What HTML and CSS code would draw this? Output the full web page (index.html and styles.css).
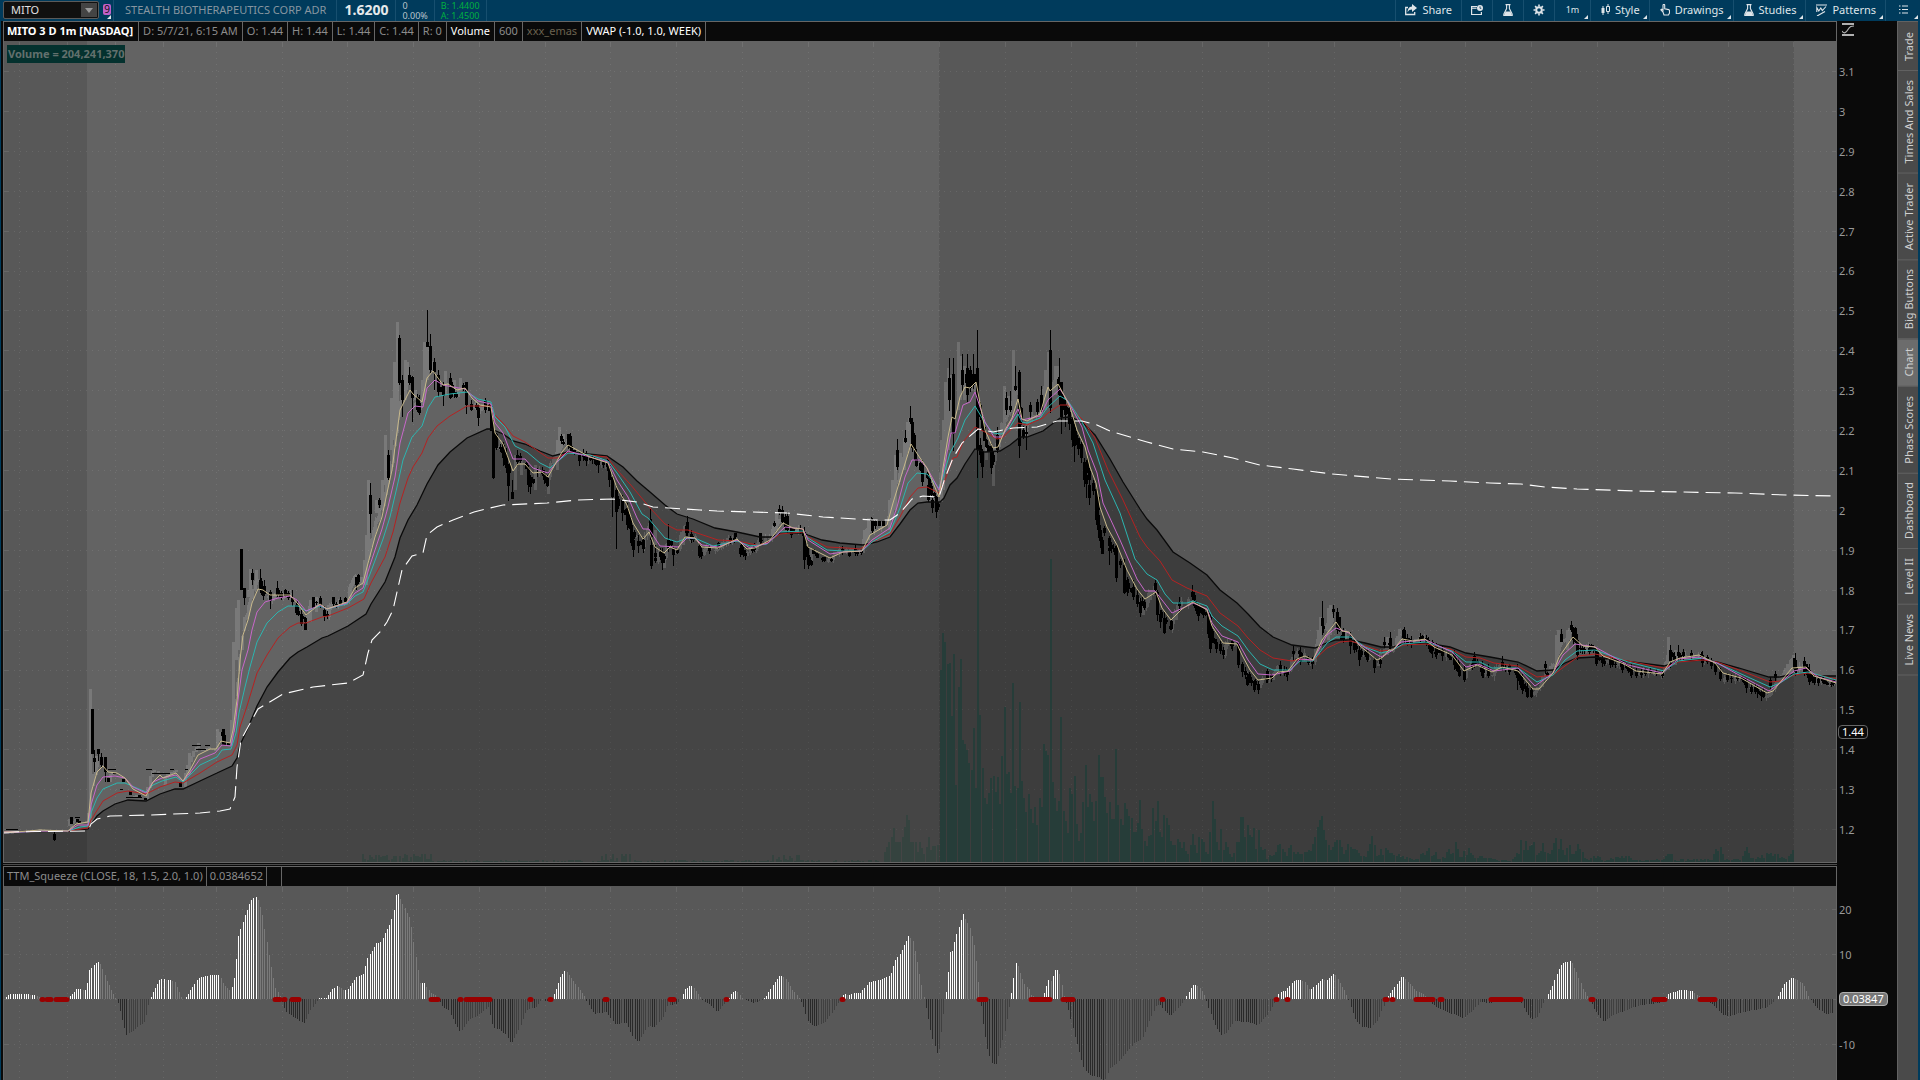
FILE: index.html
```html
<!DOCTYPE html>
<html lang="en">
  <head>
    <meta charset="UTF-8" />
    <meta name="viewport" content="width=device-width, initial-scale=1.0" />
    <title>MITO - Chart</title>
    <link rel="stylesheet" href="styles.css">
  </head>
  <body>
    <header class="topbar">
      <div class="symbol">
        <input class="symbol-input" type="text" value="MITO" aria-label="Symbol" />
        <button class="symbol-drop" aria-label="Symbol list">
          <svg width="8" height="5" viewBox="0 0 8 5"><path d="M0 0h8L4 5z" fill="#9a9a9a" /></svg>
        </button>
      </div>
      <button class="link-badge" aria-label="Link group 9"><span>9</span></button>
      <div class="company">STEALTH BIOTHERAPEUTICS CORP ADR</div>
      <div class="last">1.6200</div>
      <div class="pair"><span>0</span><span>0.00%</span></div>
      <div class="pair quote"><span>B: 1.4400</span><span>A: 1.4500</span></div>
      <nav class="tools">
        <button class="tool">
          <svg width="12" height="12" viewBox="0 0 12 12"><path d="M3 3.500H.7v7h9V8" fill="none" stroke="#dfe5e9" stroke-width="1.300" /><path d="M7 0l5 4-5 4V5.600C5 5.600 3.600 6.300 2.600 8.300 2.600 5 4 2.600 7 2.400z" fill="#dfe5e9" /></svg>
          Share
        </button>
        <button class="tool icon" aria-label="Detach">
          <svg width="12" height="12" viewBox="0 0 12 12"><path d="M6 2.500H.6v8h9.800V8" fill="none" stroke="#dfe5e9" stroke-width="1.200" /><path d="M.6 4.200h5" stroke="#dfe5e9" stroke-width="1.200" /><circle cx="9" cy="4" r="3" fill="#dfe5e9" /><path d="M9 2.300v2h1.300" fill="none" stroke="#003b5c" stroke-width=".8" /></svg>
        </button>
        <button class="tool icon" aria-label="Add study">
          <svg width="10" height="12" viewBox="0 0 10 12"><path d="M2.500.6h5M3.600.6v4L.8 10.200v1.200h8.400v-1.200L6.400 4.600v-4" fill="none" stroke="#dfe5e9" stroke-width="1.100" /><path d="M2.600 7.500h4.800l1.600 4H1z" fill="#dfe5e9" /></svg>
        </button>
        <button class="tool icon" aria-label="Settings">
          <svg width="12" height="12" viewBox="0 0 12 12"><circle cx="6" cy="6" r="2.800" fill="none" stroke="#dfe5e9" stroke-width="2" /><path d="M6 .5v2M6 9.500v2M.5 6h2M9.500 6h2M2.100 2.100l1.500 1.500M8.400 8.400l1.500 1.500M2.100 9.900l1.500-1.500M8.400 3.600l1.500-1.500" stroke="#dfe5e9" stroke-width="1.600" /></svg>
        </button>
        <button class="tool timeframe menu">1m</button>
        <button class="tool menu">
          <svg width="9" height="12" viewBox="0 0 9 12"><path d="M2 2v9M7 0v10" stroke="#dfe5e9" /><path d="M.5 4h3v5h-3z" fill="#dfe5e9" /><path d="M5.500 2.500h3v5h-3z" fill="#003b5c" stroke="#dfe5e9" /></svg>
          Style
        </button>
        <button class="tool menu">
          <svg width="10" height="12" viewBox="0 0 10 12"><path d="M3 8L.8 5.800l1-.6L3 6.300V1.200a.8.800 0 0 1 1.700 0v3.600l4 .8c.6.200.8.500.8 1.100v2.200L8.400 11H4z" fill="none" stroke="#dfe5e9" stroke-width="1.100" /></svg>
          Drawings
        </button>
        <button class="tool menu">
          <svg width="10" height="12" viewBox="0 0 10 12"><path d="M2.500.6h5M3.600.6v4L.8 10.200v1.200h8.400v-1.200L6.400 4.600v-4" fill="none" stroke="#dfe5e9" stroke-width="1.100" /><path d="M2.600 7.500h4.800l1.600 4H1z" fill="#dfe5e9" /></svg>
          Studies
        </button>
        <button class="tool menu">
          <svg width="11" height="12" viewBox="0 0 11 12"><path d="M0 1h11M1 12L9 7.500" stroke="#dfe5e9" stroke-width="1.200" /><path d="M.8 8V3.500L2.800 7l2-3 1.500 2.500L10 2.500" fill="none" stroke="#dfe5e9" stroke-width="1.100" /></svg>
          Patterns
        </button>
        <button class="tool icon list menu" aria-label="More">
          <svg width="9" height="9" viewBox="0 0 9 9"><path d="M0 1h1.500M0 4.500h1.500M0 8h1.500M3 1h6M3 4.500h6M3 8h6" stroke="#dfe5e9" stroke-width="1.200" /></svg>
        </button>
      </nav>
    </header>

    <main class="workspace">
      <div class="charts">
        <section class="panel price-panel">
          <div class="plot">
            <div class="legend">
              <span class="cell title">MITO 3 D 1m [NASDAQ]</span>
              <span class="cell">D: 5/7/21, 6:15 AM</span>
              <span class="cell">O: 1.44</span>
              <span class="cell">H: 1.44</span>
              <span class="cell">L: 1.44</span>
              <span class="cell">C: 1.44</span>
              <span class="cell">R: 0</span>
              <span class="cell on">Volume</span>
              <span class="cell">600</span>
              <span class="cell emas">xxx_emas</span>
              <span class="cell on">VWAP (-1.0, 1.0, WEEK)</span>
            </div>
            <div class="canvas">
              <svg id="price" viewBox="4 41 1832 821" preserveAspectRatio="none"></svg>
              <span class="volume-label">Volume = 204,241,370</span>
            </div>
          </div>
          <div class="axis">
            <svg class="fit" width="12" height="13" viewBox="0 0 12 13"><path d="M0 1h12M0 12h12" stroke="#b0b0b0" stroke-width="2" /><path d="M0 8c2 3 4 2 6-1.500S9.500 3 12 3" fill="none" stroke="#b0b0b0" stroke-width="1.200" /></svg>
            <ul class="scale">
              <li>3.1</li><li>3</li><li>2.9</li><li>2.8</li><li>2.7</li>
              <li>2.6</li><li>2.5</li><li>2.4</li><li>2.3</li><li>2.2</li>
              <li>2.1</li><li>2</li><li>1.9</li><li>1.8</li><li>1.7</li>
              <li>1.6</li><li>1.5</li><li>1.4</li><li>1.3</li><li>1.2</li>
            </ul>
            <span class="tag price-tag">1.44</span>
          </div>
        </section>

        <div class="splitter"></div>

        <section class="panel squeeze-panel">
          <div class="plot">
            <div class="legend">
              <span class="cell">TTM_Squeeze (CLOSE, 18, 1.5, 2.0, 1.0)</span>
              <span class="cell">0.0384652</span>
              <span class="cell empty"></span>
            </div>
            <div class="canvas">
              <svg id="squeeze" viewBox="4 886 1832 194" preserveAspectRatio="none"></svg>
            </div>
          </div>
          <div class="axis">
            <ul class="scale squeeze-scale">
              <li>20</li>
              <li>10</li>
              <li><span class="tag squeeze-tag">0.03847</span></li>
              <li>-10</li>
            </ul>
          </div>
        </section>
      </div>

      <nav class="tabs">
        <button class="tab">Trade</button>
        <button class="tab">Times And Sales</button>
        <button class="tab">Active Trader</button>
        <button class="tab">Big Buttons</button>
        <button class="tab active">Chart</button>
        <button class="tab">Phase Scores</button>
        <button class="tab">Dashboard</button>
        <button class="tab">Level II</button>
        <button class="tab">Live News</button>
      </nav>
    </main>

    <script src="chart.js"></script>
  </body>
</html>
```

FILE: styles.css
```css
* {
  box-sizing: border-box;
}
body {
  margin: 0;
  height: 100vh;
  display: flex;
  flex-direction: column;
  background: #0a0a0a;
  color: #8c8c8c;
  font-family: "Noto Sans", "Open Sans", sans-serif;
  font-size: 11px;
  line-height: 16px;
  overflow: hidden;
}
button,
input {
  font: inherit;
  border: none;
  padding: 0;
  margin: 0;
}

/* top bar */
.topbar {
  display: flex;
  flex: none;
  height: 21px;
  background: #003b5c;
}
.symbol {
  display: flex;
  width: 96px;
  height: 18px;
  margin: 1px 4px 0 3px;
  background: #101010;
  border: 1px solid #5a5a5a;
  border-radius: 2px;
}
.symbol-input {
  flex: 1;
  min-width: 0;
  padding-left: 7px;
  background: transparent;
  color: #e0e0e0;
}
.symbol-drop {
  display: flex;
  align-items: center;
  justify-content: center;
  width: 16px;
  margin: 1px;
  background: #444;
}
.link-badge {
  position: relative;
  width: 10px;
  background: transparent;
  color: #111;
}
.link-badge span {
  display: block;
  width: 8px;
  height: 11px;
  margin-top: -2px;
  border-radius: 2px;
  background: #c060c8;
  font-size: 10px;
  line-height: 11px;
}
.link-badge::after,
.menu::after {
  content: "";
  position: absolute;
  right: 2px;
  bottom: 2px;
  border: 2px solid transparent;
  border-right-color: #dfe5e9;
  border-bottom-color: #dfe5e9;
}
.company,
.last,
.pair {
  display: flex;
  align-items: center;
  padding-bottom: 2px;
  border-right: 1px solid #174f6f;
}
.company {
  padding-left: 11px;
  padding-right: 10px;
  border-left: 1px solid #174f6f;
  color: #8796a0;
}
.last {
  padding-left: 7px;
  padding-right: 7px;
  color: #e6e9eb;
  font-size: 14px;
  font-weight: bold;
}
.pair {
  flex-direction: column;
  align-items: flex-start;
  justify-content: center;
  padding: 0 6px;
  color: #b9c4cb;
  font-size: 9px;
  line-height: 10px;
}
.quote {
  color: #00b140;
}
.tools {
  display: flex;
  margin-left: auto;
}
.tool {
  position: relative;
  display: flex;
  align-items: center;
  gap: 5px;
  padding: 0 9px 2px;
  border-left: 1px solid #174f6f;
  background: transparent;
  color: #dfe5e9;
}
.tool.menu {
  padding-left: 10px;
}
.tool.icon {
  justify-content: center;
  width: 31px;
  padding: 0 0 2px;
}
.tool.list {
  width: 35px;
}
.tool.timeframe {
  justify-content: center;
  width: 36px;
  padding: 0 0 2px;
  font-size: 9px;
}

/* layout under the bar */
.workspace {
  display: flex;
  flex: 1;
  min-height: 0;
  border-left: 1px solid #003b5c;
  border-right: 2px solid #003b5c;
}
.charts {
  display: flex;
  flex: 1;
  flex-direction: column;
  min-width: 0;
  padding-left: 2px;
}
.panel {
  display: flex;
  min-height: 0;
}
.price-panel {
  flex: 842 1 0;
}
.squeeze-panel {
  flex: 214 1 0;
}
.plot {
  display: flex;
  flex: 1;
  flex-direction: column;
  min-width: 0;
  border: 1px solid #666;
}
.squeeze-panel .plot {
  border-bottom: none;
}
.splitter {
  height: 3px;
  margin-right: 60px;
  border-top: 1px solid #0a0a0a;
  border-bottom: 1px solid #0a0a0a;
  background: #4c4c4c;
}
.legend {
  display: flex;
  flex: none;
  height: 19px;
  line-height: 18px;
}
.cell {
  padding: 0 4px;
  border-right: 1px solid #666;
  white-space: nowrap;
}
.cell.title {
  padding-left: 3px;
  padding-right: 5px;
  color: #fff;
  font-weight: bold;
}
.cell.on {
  color: #fff;
}
.cell.emas {
  color: #6b6350;
}
.squeeze-panel .cell {
  padding: 0 3px;
}
.squeeze-panel .cell.empty {
  width: 15px;
}
.canvas {
  position: relative;
  flex: 1;
  min-height: 0;
}
.canvas svg {
  display: block;
  width: 100%;
  height: 100%;
}
.volume-label {
  position: absolute;
  left: 3px;
  top: 4px;
  padding: 0 1px;
  background: #04312e;
  color: #62706d;
  font-weight: bold;
  line-height: 18px;
}

/* value axis */
.axis {
  position: relative;
  display: flex;
  flex: none;
  flex-direction: column;
  width: 60px;
  padding: 2px 0 25px 2px;
}
.fit {
  flex: none;
  margin: 0 0 28px 3px;
}
.scale {
  display: flex;
  flex: 1;
  flex-direction: column;
  justify-content: space-between;
  margin: 0;
  padding: 0;
  list-style: none;
  color: #999;
}
.squeeze-scale {
  justify-content: flex-start;
  gap: 29px;
  padding-top: 34px;
}
.scale li {
  height: 16px;
}
.tag {
  padding: 0 3px;
  border: 1px solid #666;
  border-radius: 4px;
  line-height: 12px;
  color: #fff;
}
.price-tag {
  position: absolute;
  left: 1px;
  top: 83.6%;
  background: #0a0a0a;
}
.squeeze-tag {
  display: block;
  width: max-content;
  background: #777;
  border-color: #b0b0b0;
}

/* right hand tabs */
.tabs {
  display: flex;
  flex-direction: column;
  width: 21px;
  padding-top: 1px;
  background: #4a4a4a;
  border-left: 1px solid #626262;
  border-top: 1px solid #626262;
}
.tab {
  padding: 9px 0;
  border-top: 1px solid #626262;
  background: transparent;
  color: #d0d0d0;
  line-height: 19px;
  writing-mode: vertical-rl;
  transform: rotate(180deg);
}
.tab.active {
  background: #6c6c6c;
}
```

FILE: chart.js
```js
const NS = "http://www.w3.org/2000/svg";
const price = document.getElementById("price");
const squeeze = document.getElementById("squeeze");
const STEP = 2.19; // one minute bar

function add(parent, name, attrs) {
  const el = document.createElementNS(NS, name);
  for (const key in attrs) el.setAttribute(key, attrs[key]);
  parent.appendChild(el);
  return el;
}

function pairs(text) {
  return text.trim().split(/\s+/).map((p) => p.split(",").map(Number));
}

function rect(x, y, w, h) {
  return `M${Math.round(x)} ${Math.round(y)}h${w}v${Math.round(h)}h${-w}z`;
}

// linear interpolation over sorted [x, value] points
function valueAt(points, x) {
  for (let i = 1; i < points.length; i++) {
    if (x <= points[i][0]) {
      const [x0, y0] = points[i - 1];
      const [x1, y1] = points[i];
      return x1 === x0 ? y1 : y0 + ((y1 - y0) * (x - x0)) / (x1 - x0);
    }
  }
  return points[points.length - 1][1];
}

let seed = 7;
function random() {
  seed = (seed * 16807) % 2147483647;
  return seed / 2147483647;
}

const columns = [
  19, 67, 115, 163, 216, 282, 347, 413, 479, 545, 610, 676, 742, 808, 873,
  939, 1005, 1071, 1136, 1202, 1268, 1334, 1400, 1465, 1531, 1597, 1663, 1728,
  1793,
];

function grid(svg, top, bottom, rows) {
  const g = add(svg, "g", { stroke: "#fff", "stroke-opacity": 0.09 });
  for (const x of columns) {
    add(g, "path", { d: `M${x + 0.5} ${top + 11}V${bottom}`, "stroke-dasharray": "1 5" });
    add(g, "path", { d: `M${x + 0.5} ${top + 1}v5` });
  }
  for (const y of rows) {
    add(g, "path", { d: `M8 ${y + 0.5}H1832`, "stroke-dasharray": "1 5" });
    add(g, "path", { d: `M4 ${y + 0.5}h4M1832 ${y + 0.5}h4` });
  }
}

/* moving averages */
const tan = pairs(`4,833 40,830 68,831 76,824 88,822 91,793 97,772 103,766 108,772 117,773 125,778
133,789 146,796 153,782 160,775 163,778 176,773 183,781 190,770 198,755 210,749 216,749 221,741 230,743
233,730 237,700 240,660 243,635 248,620 252,603 258,589 263,590 270,595 278,595 290,595 298,604 306,615
320,604 327,609 347,602 355,588 363,583 367,567 375,537 382,517 387,493 392,470 395,447 400,410 410,390
413,394 422,402 427,378 433,371 443,385 448,384 457,390 465,388 472,398 480,405 491,407 495,433 503,444
513,471 518,464 525,464 533,473 542,472 548,477 562,452 568,445 590,457 608,463 617,488 627,505 633,523
643,539 649,532 655,547 664,553 670,547 677,550 685,537 695,538 702,547 718,548 737,539 747,549 755,548
770,540 783,523 793,528 803,529 808,547 830,558 843,552 862,551 870,535 887,525 893,503 900,480 911,444
918,455 927,468 939,497 943,468 948,437 952,417 955,419 960,397 965,387 970,388 976,382 980,403 985,430
993,448 998,447 1005,430 1012,418 1018,399 1022,419 1027,421 1040,414 1048,387 1050,391 1058,384
1065,397 1070,407 1077,430 1085,447 1090,467 1096,483 1100,507 1107,527 1117,545 1127,570 1137,589
1145,599 1156,592 1162,608 1171,620 1182,609 1193,602 1207,610 1212,626 1223,643 1237,644 1242,655
1250,670 1258,680 1272,678 1278,672 1288,671 1297,659 1305,656 1313,660 1322,640 1336,622 1342,631
1349,632 1359,645 1377,660 1383,657 1389,650 1393,650 1402,639 1413,641 1425,639 1434,647 1452,655
1464,671 1477,665 1492,672 1502,667 1518,671 1533,689 1539,689 1553,673 1559,657 1573,637 1583,646
1595,647 1603,656 1624,664 1636,671 1662,674 1670,662 1680,658 1699,655 1715,663 1723,673 1741,678
1767,693 1773,691 1792,668 1806,667 1814,676 1836,683`);

const magenta = pairs(`4,833 40,831 68,831 78,825 88,825 91,805 97,785 103,777 115,776 125,778 133,787
146,793 153,782 162,778 176,775 183,781 190,773 200,759 215,753 222,745 231,746 235,727 238,700 242,670
248,650 252,630 257,612 265,602 278,598 290,596 297,600 306,611 320,605 327,609 347,603 355,593 363,588
370,565 382,529 388,507 395,477 400,443 408,413 415,406 423,407 427,388 435,380 443,385 453,387 465,389
478,401 491,404 495,423 503,433 513,459 525,459 533,468 548,473 557,462 568,451 590,457 608,462 617,480
628,497 637,518 643,529 649,529 660,546 678,547 687,538 695,538 702,545 718,547 737,540 750,548 768,543
785,527 803,529 808,540 830,554 843,552 862,551 872,540 890,528 897,507 905,477 912,460 920,460 927,468
939,490 943,473 951,433 955,433 963,405 970,402 975,392 985,422 994,437 1002,437 1010,423 1018,409
1022,420 1040,416 1048,400 1060,389 1070,405 1082,427 1088,450 1097,473 1103,503 1120,540 1137,579
1145,591 1155,591 1162,600 1172,613 1187,606 1193,603 1207,609 1212,623 1222,636 1238,642 1248,660
1258,674 1272,675 1290,671 1300,659 1313,660 1327,635 1336,628 1349,633 1359,644 1381,657 1393,650
1401,642 1426,640 1452,652 1466,667 1478,664 1494,671 1518,668 1535,686 1553,673 1563,655 1575,644
1595,647 1628,665 1662,673 1678,659 1699,657 1717,663 1739,675 1769,691 1780,683 1794,671 1806,668
1818,677 1836,682`);

const cyan = pairs(`4,833 40,831 68,831 80,827 88,826 91,813 97,798 103,789 117,783 125,783 146,792
153,785 162,781 176,777 183,782 192,773 200,765 217,757 222,750 231,749 236,733 239,713 245,687 250,667
257,642 267,623 278,612 288,606 298,606 306,611 320,606 327,609 347,604 355,596 363,592 370,574 383,539
390,517 397,487 403,460 412,437 422,426 428,408 435,397 450,394 467,392 478,399 491,402 495,417 505,427
515,446 527,452 540,463 550,468 557,462 568,453 590,455 608,461 617,473 630,492 642,514 648,518 665,538
677,542 687,538 697,539 713,546 737,541 750,546 767,544 780,532 803,531 808,538 827,550 843,551 862,551
872,542 890,532 900,508 908,483 917,473 927,474 939,488 943,477 950,453 958,438 965,420 975,406 985,423
993,433 1002,434 1010,427 1018,414 1022,422 1027,423 1040,418 1047,408 1060,396 1068,401 1082,422
1093,443 1105,480 1120,513 1135,559 1147,574 1157,580 1165,594 1173,603 1187,603 1193,601 1207,606
1212,616 1222,626 1238,636 1248,650 1260,664 1273,670 1290,670 1300,661 1313,661 1327,643 1336,637
1351,637 1365,647 1381,653 1393,650 1403,644 1426,642 1452,651 1466,662 1480,662 1492,668 1518,668
1537,682 1553,675 1565,660 1577,651 1595,650 1628,662 1664,671 1678,661 1703,658 1717,663 1739,673
1770,687 1780,683 1794,674 1808,672 1836,680`);

const red = pairs(`4,832 68,831 88,828 91,820 103,801 117,793 128,791 146,794 160,787 175,782 183,783
200,773 217,762 232,755 237,745 240,727 247,706 257,673 267,655 278,638 290,627 298,623 306,623 322,617
328,616 348,608 364,599 371,583 385,557 393,532 400,503 408,478 413,467 422,453 428,438 437,426 450,416
467,406 491,406 493,413 503,423 513,436 525,442 548,458 557,458 568,452 580,454 607,457 617,470 630,484
650,508 665,524 677,530 688,530 697,533 718,540 737,541 757,545 767,543 780,534 803,532 808,537 827,547
847,548 860,549 870,543 890,534 900,517 910,497 918,488 927,487 939,493 945,480 953,458 957,457 963,442
975,427 985,432 997,439 1002,438 1018,423 1027,425 1043,418 1048,413 1060,405 1068,405 1082,419 1095,438
1108,470 1123,500 1140,537 1147,547 1160,561 1172,580 1187,588 1207,596 1220,613 1238,626 1248,638
1260,650 1273,658 1292,661 1300,659 1313,661 1327,648 1340,642 1351,641 1365,646 1381,651 1393,650
1403,645 1426,644 1450,649 1466,657 1480,658 1494,663 1518,666 1537,677 1553,675 1565,666 1579,656
1595,654 1628,661 1664,668 1678,662 1703,660 1717,662 1739,670 1770,682 1780,681 1794,675 1808,673
1836,679`);

const black = pairs(`4,832 69,831 88,829 92,823 97,816 103,811 115,804 128,800 146,801 160,794 175,789
183,789 200,781 217,773 232,766 237,758 240,745 247,730 257,706 267,687 278,672 290,658 298,652 307,647
322,638 328,636 348,626 366,614 371,604 385,582 395,557 400,538 408,520 417,505 427,484 438,465 450,452
467,438 487,429 491,429 503,434 513,441 525,444 540,451 553,456 568,452 578,453 607,456 623,467 637,481
650,492 665,505 677,514 693,519 715,528 737,532 760,537 772,537 780,533 803,533 808,535 822,540 840,543
863,545 877,542 890,537 900,524 910,510 918,503 927,502 940,502 944,498 950,485 957,478 965,464 975,449
985,452 1000,451 1010,445 1020,437 1027,437 1043,431 1060,418 1068,417 1073,418 1083,423 1095,435
1110,459 1123,482 1140,509 1147,519 1157,530 1173,552 1190,563 1207,575 1220,590 1237,603 1248,614
1260,627 1273,637 1292,645 1315,648 1324,644 1336,640 1351,640 1365,643 1381,647 1393,647 1403,644
1426,643 1450,647 1466,653 1490,657 1518,662 1537,671 1553,670 1565,663 1577,658 1595,657 1624,661
1664,666 1680,661 1703,660 1717,662 1739,668 1769,677 1780,677 1794,674 1806,673 1818,676 1836,676`);

const vwap = pairs(`4,832 88,831 91,824 97,819 110,816 150,815 200,813 220,811 230,809 235,797 237,767
241,740 248,727 258,709 268,703 283,694 313,687 348,683 363,675 368,653 372,640 380,632 387,622 393,610
397,592 402,570 412,556 423,553 427,535 437,527 453,520 474,512 490,508 503,505 547,503 577,500 613,499
637,502 653,507 700,510 717,511 787,513 823,517 873,520 890,520 900,513 912,499 923,496 939,497 945,478
953,458 962,443 978,429 993,432 1013,428 1037,427 1057,421 1082,421 1097,425 1110,431 1140,440 1147,442
1173,449 1203,452 1233,458 1260,465 1293,469 1332,474 1391,479 1450,481 1490,483 1521,484 1545,487
1577,489 1636,491 1680,492 1735,493 1786,495 1836,496`);

/* falling candles: x, high, body top, body bottom, low */
const downBars = pairs(`54,830,834,840,841 71,817,817,824,824 92,709,709,754,754 94,750,758,762,772
98,749,749,754,761 101,753,757,765,767 105,757,757,772,782 223,729,729,745,745 241,549,549,590,590
244,588,588,598,605 252,569,573,580,585 260,569,580,590,592 264,580,586,594,596 270,590,592,600,609
277,581,588,595,597 285,589,590,596,597 292,590,598,602,606 297,600,605,613,615 301,610,615,624,626
305,620,623,630,630 313,597,597,609,609 320,597,598,605,608 324,606,610,616,621 333,597,597,604,606
340,597,600,604,606 345,597,598,602,603 356,577,577,585,590 370,483,495,514,533 379,498,500,505,508
388,450,455,478,480 399,335,338,383,385 402,375,380,400,417 409,367,375,383,385 412,378,380,398,422
417,394,397,410,412 419,395,403,413,415 427,310,342,347,347 430,334,346,366,367 434,358,362,372,390
438,370,375,392,397 443,382,385,396,406 450,373,378,398,399 466,382,382,405,414 471,400,404,410,411
478,405,408,418,426 485,398,400,410,411 489,403,405,411,411 491,403,406,431,431 493,420,430,478,479
503,442,445,458,466 506,448,455,468,473 508,465,470,486,501 512,480,492,499,499 517,450,455,462,466
528,465,470,485,492 530,475,478,487,494 544,470,474,480,484 547,475,478,486,487 561,434,436,441,444
568,434,434,445,449 571,443,446,452,453 579,452,455,461,466 586,451,455,461,466 598,459,460,465,473
607,459,460,466,471 609,462,465,480,487 612,474,480,497,517 616,485,490,512,549 622,495,500,513,521
627,503,508,525,530 631,517,525,543,546 633,536,540,550,557 638,535,541,546,553 643,537,540,549,553
650,508,520,530,540 651,535,545,566,569 655,545,553,557,560 662,548,552,563,570 668,524,540,548,552
673,546,549,555,566 687,516,522,533,536 691,530,534,540,543 699,542,546,556,558 700,546,548,553,557
709,545,547,551,554 718,542,543,548,549 735,533,533,537,540 740,545,548,554,557 743,549,550,555,557
752,547,549,551,553 760,533,533,542,545 774,521,523,526,527 779,505,509,513,515 782,506,510,522,524
787,512,516,525,527 791,527,528,535,538 800,525,528,532,534 804,527,532,560,569 808,556,560,565,569
811,560,561,565,566 824,557,557,561,562 849,551,552,556,557 871,517,519,521,523 875,520,521,526,529
879,521,521,526,526 883,521,521,526,526 897,439,450,467,470 905,430,438,442,443 910,406,418,422,424
912,418,422,448,452 915,445,449,460,462 922,460,465,482,486 928,478,485,500,502 932,498,500,508,513
936,502,504,512,518 949,358,378,400,411 953,358,374,434,451 962,354,370,385,393 967,354,368,395,402
970,366,370,388,392 973,354,374,385,389 977,330,368,450,478 980,438,445,455,463 982,449,452,467,478
991,443,446,468,474 997,427,435,450,452 1006,392,398,410,415 1010,391,406,410,412 1015,366,386,390,391
1019,370,372,446,458 1026,426,432,434,450 1030,402,405,412,418 1037,399,402,412,417 1041,386,395,410,412
1050,330,350,408,413 1059,358,382,395,405 1061,382,382,417,434 1065,397,405,415,427 1069,407,412,424,430
1072,417,425,440,447 1074,430,438,446,462 1078,438,438,449,455 1081,442,444,458,463 1084,458,462,480,487
1086,470,475,484,498 1089,478,485,498,505 1096,487,489,520,525 1098,507,515,530,538 1100,525,530,541,548
1102,537,540,554,554 1109,542,548,551,565 1116,544,546,578,582 1124,559,565,593,594 1127,577,580,592,596
1133,580,587,596,600 1137,590,595,603,607 1140,598,602,613,617 1155,580,583,590,595 1157,590,592,615,621
1160,610,614,622,628 1164,612,620,633,634 1171,620,621,629,630 1179,597,602,606,612 1192,585,592,597,600
1194,592,595,600,603 1198,604,606,616,621 1203,607,609,615,618 1208,611,613,634,638 1210,628,632,649,653
1216,639,642,649,653 1220,644,646,651,654 1232,640,642,646,651 1238,643,645,665,668 1242,662,664,671,677
1247,673,677,685,686 1254,680,681,690,692 1258,682,685,690,694 1267,669,671,680,683 1280,661,665,670,674
1287,669,671,675,681 1293,646,651,654,661 1300,647,652,662,665 1312,657,660,664,669 1322,601,618,626,635
1333,605,609,612,618 1337,608,612,630,634 1343,628,632,640,643 1350,632,636,646,654 1354,640,643,650,653
1359,646,650,660,666 1367,650,653,659,662 1374,657,660,668,673 1380,656,660,664,668 1384,637,642,645,648
1390,632,638,646,650 1403,629,630,638,640 1407,634,638,643,646 1420,633,637,640,644 1428,637,640,645,648
1432,640,642,651,658 1436,643,645,655,659 1442,646,650,656,661 1454,650,654,665,670 1458,658,662,672,676
1464,666,670,680,682 1474,652,656,664,668 1482,661,665,676,678 1488,664,668,674,678 1502,656,662,667,671
1509,664,666,672,675 1517,664,668,678,690 1522,674,680,690,694 1527,682,688,697,698 1531,686,690,697,698
1545,661,664,668,674 1561,629,634,642,642 1571,621,625,630,632 1573,627,630,640,644 1577,634,640,655,660
1589,644,648,652,655 1596,650,652,664,666 1602,655,658,663,667 1610,657,660,665,668 1622,662,665,670,673
1631,664,668,675,678 1636,668,672,676,678 1650,668,670,673,674 1662,671,673,676,678 1670,645,650,661,668
1678,645,652,656,662 1683,649,652,656,660 1691,650,653,656,660 1701,652,654,658,661 1707,655,657,662,664
1715,662,664,672,675 1720,668,672,679,681 1727,673,675,680,682 1746,678,682,688,693 1751,684,687,692,694
1757,686,689,692,698 1763,688,692,697,698 1770,677,680,686,690 1775,671,674,678,682 1795,653,660,672,676
1804,657,661,672,676 1809,664,670,682,685 1814,674,677,681,682 1822,676,678,681,683 1833,678,680,684,686`);

/* rising candles: x, top, bottom */
const upBars = pairs(`69,819,826 90,689,825 96,756,775 189,753,775 217,729,750 231,720,740 233,642,720
236,608,660 238,600,650 248,590,597 250,569,595 256,570,585 310,600,622 316,597,612 328,605,615
350,588,600 362,577,585 364,560,585 366,535,585 368,480,560 376,500,513 382,480,505 385,435,485
391,398,450 394,362,440 397,322,420 405,360,400 407,362,385 415,390,400 422,380,405 424,342,400
427,342,380 445,371,395 454,380,395 460,378,392 476,400,410 500,440,450 515,455,490 521,460,475
535,465,490 548,475,494 557,440,470 559,427,455 563,434,445 655,530,545 664,553,568 683,530,545
776,513,530 864,530,548 868,518,540 889,500,530 892,480,520 895,455,510 900,453,470 904,438,470
907,422,450 909,418,445 941,440,502 943,420,490 945,382,470 948,368,450 951,375,420 958,342,410
960,356,400 964,366,400 975,375,392 986,440,460 993,448,486 1004,386,430 1008,396,415 1013,350,410
1045,370,410 1048,352,400 1055,366,395 1057,366,390 1143,600,615 1150,590,600 1176,610,620 1318,630,655
1320,617,650 1328,608,640 1330,605,635 1387,637,655 1399,629,645 1556,635,665 1558,630,650 1567,630,650
1569,628,640 1668,637,670 1675,650,665 1787,664,676 1790,660,675 1793,655,675`);

/* volume, one entry per bar starting at 939 */
const volume = [
  192, 229, 220, 198, 199, 146, 208, 77, 175, 203, 122, 118, 112, 99, 92, 134,
  74, 402, 147, 94, 64, 58, 69, 84, 86, 70, 85, 58, 106, 155, 88, 90, 69, 179,
  76, 74, 160, 81, 64, 50, 68, 53, 39, 55, 37, 64, 55, 118, 111, 107, 303, 80,
  64, 51, 61, 145, 51, 41, 29, 74, 68, 86, 38, 21, 29, 60, 97, 55, 68, 60, 41,
  61, 107, 85, 85, 65, 49, 60, 43, 43, 113, 57, 43, 37, 59, 53, 46, 44, 30, 30,
  39, 62, 33, 21, 16, 26, 27, 54, 41, 61, 30, 25, 47, 44, 37, 21, 17, 17, 23,
  20, 14, 20, 11, 8, 17, 28, 17, 9, 25, 23, 20, 10, 8, 30, 61, 43, 20, 12, 33,
  12, 20, 15, 8, 5, 9, 20, 20, 45, 45, 25, 37, 27, 25, 34, 13, 32, 15, 12, 13,
];
const premarket = [
  10, 15, 20, 25, 34, 20, 20, 20, 25, 35, 47, 42, 20, 20, 20, 10, 20, 14, 8,
  15, 25, 12, 16, 16, 17,
];
const volumePeaks = pairs(`1268,8 1280,24 1284,8 1291,29 1297,14 1300,18 1304,8 1314,20 1318,45 1322,61
1326,27 1330,15 1338,28 1343,8 1350,22 1355,10 1359,15 1365,5 1371,26 1376,10 1382,15 1391,10 1402,6
1415,4 1429,14 1440,6 1455,19 1460,8 1466,17 1472,8 1490,4 1510,2 1516,9 1523,28 1528,15 1533,22
1538,8 1542,20 1548,6 1556,25 1561,26 1565,12 1570,18 1576,19 1584,6 1590,5 1596,10 1602,3 1626,7
1632,2 1655,3 1663,6 1669,15 1674,3 1700,3 1711,4 1718,20 1723,4 1740,3 1746,16 1750,4 1767,9 1785,8
1790,8 1794,21`);

function drawVolume() {
  let left = "";
  let right = "";
  for (let x = 360; x < 880; x += STEP) {
    const near = x < 432 || (x > 600 && x < 630) || (x > 770 && x < 800);
    const h = Math.round(random() * (near ? 9 : 2));
    left += rect(x, 862 - h, 2, h);
  }
  premarket.forEach((h, i) => (left += rect(884 + i * STEP, 862 - h, 2, h)));
  volume.forEach((h, i) => (right += rect(940 + i * STEP, 862 - h, 2, h)));
  for (let x = 940 + volume.length * STEP; x < 1793; x += STEP) {
    const h = Math.max(1, valueAt(volumePeaks, x) * (0.4 + random() * 0.7));
    right += rect(x, 862 - Math.round(h), 2, h);
  }
  add(price, "path", { d: left, fill: "#35433f", "shape-rendering": "crispEdges" });
  add(price, "path", { d: right, fill: "#263d39", "shape-rendering": "crispEdges" });
}

function drawCandles() {
  let up = "";
  let down = "";
  let last = tan[0][1];
  // small bars running ahead of the fast average
  for (let x = 5; x < 1834; x += STEP) {
    const y = valueAt(tan, x);
    const lead = Math.max(-14, Math.min(14, 3 * (y - valueAt(tan, x - STEP))));
    const quiet = x < 230 ? 1 : 5;
    const close = y + lead + (random() - 0.5) * quiet;
    const top = Math.min(close, last);
    const size = Math.min(14, Math.abs(close - last) + 1);
    const wick = quiet > 1 ? random() * 4 : 0;
    const d = rect(x - 1, top, 3, size) + rect(x, top - wick, 1, size + 2 * wick);
    if (close <= last) up += d;
    else if (random() < (quiet > 1 ? 0.7 : 0.4)) down += d;
    last = close;
  }
  for (const [x, top, bottom] of upBars) {
    up += rect(x - 1, top, 3, bottom - top);
  }
  for (const [x, high, top, bottom, low] of downBars) {
    down += rect(x - 1, top, 3, bottom - top) + rect(x, high, 1, low - high);
  }
  // thin prints before the open
  for (const [x, y, w] of pairs(`6,829,12 20,831,30 75,817,5 108,769,8 146,769,6 152,773,18 170,769,4
185,769,3 192,745,9 205,745,5 196,749,10 126,797,16 120,789,3`)) {
    down += rect(x, y, w, 1);
  }
  add(price, "path", { d: up, fill: "#fff", "fill-opacity": 0.14, "shape-rendering": "crispEdges" });
  add(price, "path", { d: down, fill: "#000", "shape-rendering": "crispEdges" });
}

function drawPrice() {
  const bands = [[4, 87, "#585858"], [87, 939, "#636363"], [939, 1794, "#585858"], [1794, 1836, "#636363"]];
  for (const [from, to, fill] of bands) {
    add(price, "rect", { x: from, y: 41, width: to - from, height: 821, fill });
  }
  const rows = [];
  for (let i = 0; i < 20; i++) rows.push(Math.round(71 + i * 39.9));
  grid(price, 41, 862, rows);
  add(price, "polygon", {
    points: `4,862 ${black.join(" ")} 1836,862`,
    fill: "#000",
    "fill-opacity": 0.3,
  });
  drawVolume();
  drawCandles();
  const lines = [
    [black, "#0a0a0a", 1.3],
    [red, "#b52222", 1],
    [cyan, "#2cb5b0", 1],
    [magenta, "#c768c9", 1],
    [tan, "#c8b98c", 1],
  ];
  for (const [points, stroke, width] of lines) {
    add(price, "polyline", { points: points.join(" "), fill: "none", stroke, "stroke-width": width });
  }
  add(price, "polyline", {
    points: vwap.join(" "),
    fill: "none",
    stroke: "#fff",
    "stroke-width": 1.1,
    "stroke-dasharray": "15 7",
  });
}

/* histogram envelope: x, bar height */
const momentum = pairs(`4,1 6,2 10,5 25,5 38,3 42,0 65,0 72,5 76,10 86,9 89,29 95,35 98,37 101,34 106,20
112,7 116,0 118,-5 126,-36 134,-31 145,-22 148,-7 150,0 152,6 159,19 163,20 174,18 178,10 182,0 185,1
198,21 210,24 219,24 224,14 230,8 233,15 236,40 238,63 244,82 250,97 255,103 258,99 262,85 266,60 271,32
275,12 281,0 285,-12 293,-18 304,-24 310,-11 316,-4 319,1 326,1 332,10 337,13 344,9 348,10 356,22 363,25
367,40 376,56 380,56 385,66 391,78 394,91 396,105 398,105 404,92 410,80 415,45 420,15 424,16 430,7 435,4
438,0 443,-9 448,-10 455,-25 460,-33 470,-20 480,-15 488,-8 493,-28 500,-31 506,-36 511,-45 519,-30
526,-11 536,-8 542,0 545,-2 551,-1 555,8 560,22 565,29 570,22 578,11 584,3 587,-4 594,-15 606,-13
615,-25 626,-24 632,-37 638,-43 648,-27 655,-28 663,-18 668,-6 676,-5 681,0 684,9 690,13 693,12 698,5
703,-2 708,-4 717,-13 726,-3 731,5 736,9 742,1 753,-4 762,-1 766,3 775,18 780,24 786,20 792,9 798,3
802,-5 808,-23 815,-28 825,-23 833,-12 839,-3 843,5 850,4 852,6 860,6 869,17 882,20 890,24 895,39
900,46 909,64 913,57 918,32 923,5 926,-10 931,-35 938,-58 944,-10 946,12 950,48 952,48 955,60 960,76
963,85 970,70 975,50 977,30 980,2 981,-15 987,-50 992,-65 996,-65 1004,-35 1010,-3 1012,12 1016,39
1021,22 1026,12 1028,12 1031,4 1038,0 1042,0 1046,12 1048,20 1050,16 1056,31 1059,27 1064,2 1068,-10
1074,-35 1084,-70 1091,-77 1100,-78 1104,-84 1109,-70 1116,-65 1125,-55 1135,-43 1142,-40 1150,-20
1156,-6 1160,-6 1165,-13 1170,-17 1178,-9 1185,0 1189,8 1194,15 1200,11 1205,2 1208,-8 1214,-25
1221,-36 1227,-33 1234,-22 1247,-23 1258,-26 1268,-15 1275,-2 1278,4 1281,8 1285,8 1293,18 1297,19
1304,18 1310,9 1315,13 1322,20 1326,18 1334,26 1338,19 1345,7 1348,0 1355,-20 1362,-28 1370,-29
1378,-21 1385,-3 1389,5 1396,14 1402,23 1408,17 1416,8 1426,3 1432,-5 1438,-9 1450,-14 1463,-19
1472,-12 1480,-3 1490,-4 1495,-1 1520,-1 1525,-12 1531,-20 1537,-18 1544,-3 1546,1 1553,15 1560,34
1566,37 1571,38 1577,25 1583,10 1589,0 1594,-10 1603,-23 1612,-17 1628,-10 1640,-6 1660,-4 1665,0
1668,5 1680,9 1692,8 1700,2 1706,-2 1715,-7 1722,-16 1730,-17 1742,-13 1765,-9 1774,-3 1778,4 1785,16
1792,22 1803,15 1810,0 1816,-8 1825,-15 1832,-14`);

/* runs of squeeze dots: first x, last x */
const dots = pairs(`42,43 47,51 56,67 275,280 284,285 292,299 431,438 460,461 466,490 530,531 550,551
605,607 670,674 726,727 842,843 979,986 1031,1050 1063,1073 1162,1163 1276,1277 1287,1288 1385,1387
1392,1393 1416,1433 1440,1442 1491,1521 1591,1593 1654,1665 1700,1715`);

function drawSqueeze() {
  add(squeeze, "rect", { x: 4, y: 886, width: 1832, height: 194, fill: "#585858" });
  grid(squeeze, 886, 1080, [909, 954, 999, 1044]);
  const bars = { "#ffffff": "", "#7a7a7a": "", "#292929": "", "#404040": "" };
  let last = 0;
  for (let x = 6; x < 1834; x += STEP) {
    const h = Math.round(valueAt(momentum, x));
    if (h >= 0) bars[h >= last ? "#ffffff" : "#7a7a7a"] += rect(x, 999 - h, 1, h);
    else bars[h <= last ? "#292929" : "#404040"] += rect(x, 999, 1, -h);
    last = h;
  }
  for (const fill in bars) {
    add(squeeze, "path", { d: bars[fill], fill, "shape-rendering": "crispEdges" });
  }
  for (const [from, to] of dots) {
    add(squeeze, "path", {
      d: `M${from} 999.5H${to}`,
      stroke: "#990000",
      "stroke-width": 5,
      "stroke-linecap": "round",
    });
  }
}

drawPrice();
drawSqueeze();
```
